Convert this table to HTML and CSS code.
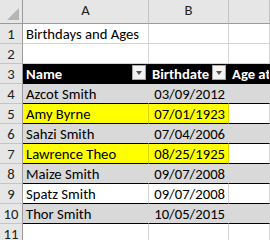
FILE: index.html
```html
<!DOCTYPE html>
<html lang="en">
<head>
    <meta charset="UTF-8">
    <title>Birthdays and Ages</title>
    <link rel="stylesheet" href="styles.css">
</head>
<body>

    <div class="sheet">
        <!-- column headers -->
        <div class="corner"><span class="corner-mark"></span></div>
        <div class="col-head">A</div>
        <div class="col-head">B</div>
        <div class="col-head"></div>

        <div class="row-head">1</div>
        <div class="cell">Birthdays and Ages</div>
        <div class="cell"></div>
        <div class="cell"></div>

        <div class="row-head">2</div>
        <div class="cell"></div>
        <div class="cell"></div>
        <div class="cell"></div>

        <!-- table header -->
        <div class="row-head">3</div>
        <div class="cell th">Name <span class="filter"></span></div>
        <div class="cell th">Birthdate <span class="filter"></span></div>
        <div class="cell th">Age at</div>

        <div class="row-head">4</div>
        <div class="cell band">Azcot Smith</div>
        <div class="cell band date">03/09/2012</div>
        <div class="cell band"></div>

        <div class="row-head">5</div>
        <div class="cell row hl">Amy Byrne</div>
        <div class="cell row hl date">07/01/1923</div>
        <div class="cell row"></div>

        <div class="row-head">6</div>
        <div class="cell band">Sahzi Smith</div>
        <div class="cell band date">07/04/2006</div>
        <div class="cell band"></div>

        <div class="row-head">7</div>
        <div class="cell row hl">Lawrence Theo</div>
        <div class="cell row hl date">08/25/1925</div>
        <div class="cell row"></div>

        <div class="row-head">8</div>
        <div class="cell band">Maize Smith</div>
        <div class="cell band date">09/07/2008</div>
        <div class="cell band"></div>

        <div class="row-head">9</div>
        <div class="cell row">Spatz Smith</div>
        <div class="cell row date">09/07/2008</div>
        <div class="cell row"></div>

        <div class="row-head">10</div>
        <div class="cell band">Thor Smith</div>
        <div class="cell band date">10/05/2015</div>
        <div class="cell band"></div>

        <div class="row-head">11</div>
        <div class="cell"></div>
        <div class="cell"></div>
        <div class="cell"></div>
    </div>

</body>
</html>
```

FILE: styles.css
```css
body {
    font-family: Calibri, Carlito, "Liberation Sans", sans-serif;
    font-size: 14.67px;
    background-color: #ffffff;
    color: #000;
    margin: 0;
    padding: 0;
    overflow: hidden;
}
/* Grid of cells */
.sheet {
    display: grid;
    grid-template-columns: 23px 126px 80px 1fr;
    grid-template-rows: 24px;
    grid-auto-rows: 20px;
}
.sheet > div {
    box-sizing: border-box;
    border-right: 1px solid #d4d4d4;
    border-bottom: 1px solid #d4d4d4;
    line-height: 20px;
    white-space: nowrap;
    overflow: hidden;
}
/* Headers */
.corner, .col-head, .row-head {
    background-color: #e6e6e6;
    color: #222;
}
.corner {
    position: relative;
    border-right-color: #9b9b9b !important;
    border-bottom-color: #9b9b9b !important;
}
.corner-mark {
    position: absolute;
    right: 3px;
    bottom: 3px;
    width: 0;
    height: 0;
    border-left: 12px solid transparent;
    border-bottom: 12px solid #b5b5b5;
}
.col-head {
    text-align: center;
    line-height: 24px;
    border-right-color: #c4c4c4 !important;
    border-bottom-color: #9b9b9b !important;
}
.row-head {
    text-align: center;
    border-right-color: #9b9b9b !important;
    border-bottom-color: #c4c4c4 !important;
}
.cell {
    padding-left: 3px;
}
/* Table */
.th {
    position: relative;
    background-color: #000;
    color: #fff;
    font-weight: bold;
    border-color: #000 !important;
}
.filter {
    position: absolute;
    right: 2px;
    top: 1px;
    width: 14px;
    height: 15px;
    box-sizing: border-box;
    background-color: #f3f3f3;
    border: 1px solid #a6a6a6;
}
.filter::after {
    content: "";
    position: absolute;
    left: 3px;
    top: 5px;
    border-left: 3.5px solid transparent;
    border-right: 3.5px solid transparent;
    border-top: 4px solid #555;
}
.band {
    background-color: #d9d9d9;
    border-right-color: #d9d9d9 !important;
    border-bottom-color: #000 !important;
}
.row {
    border-bottom-color: #000 !important;
}
.hl {
    background-color: #ffff00;
    border-right-color: #d8d800 !important;
}
.date {
    text-align: right;
    padding-right: 3px;
}
```
